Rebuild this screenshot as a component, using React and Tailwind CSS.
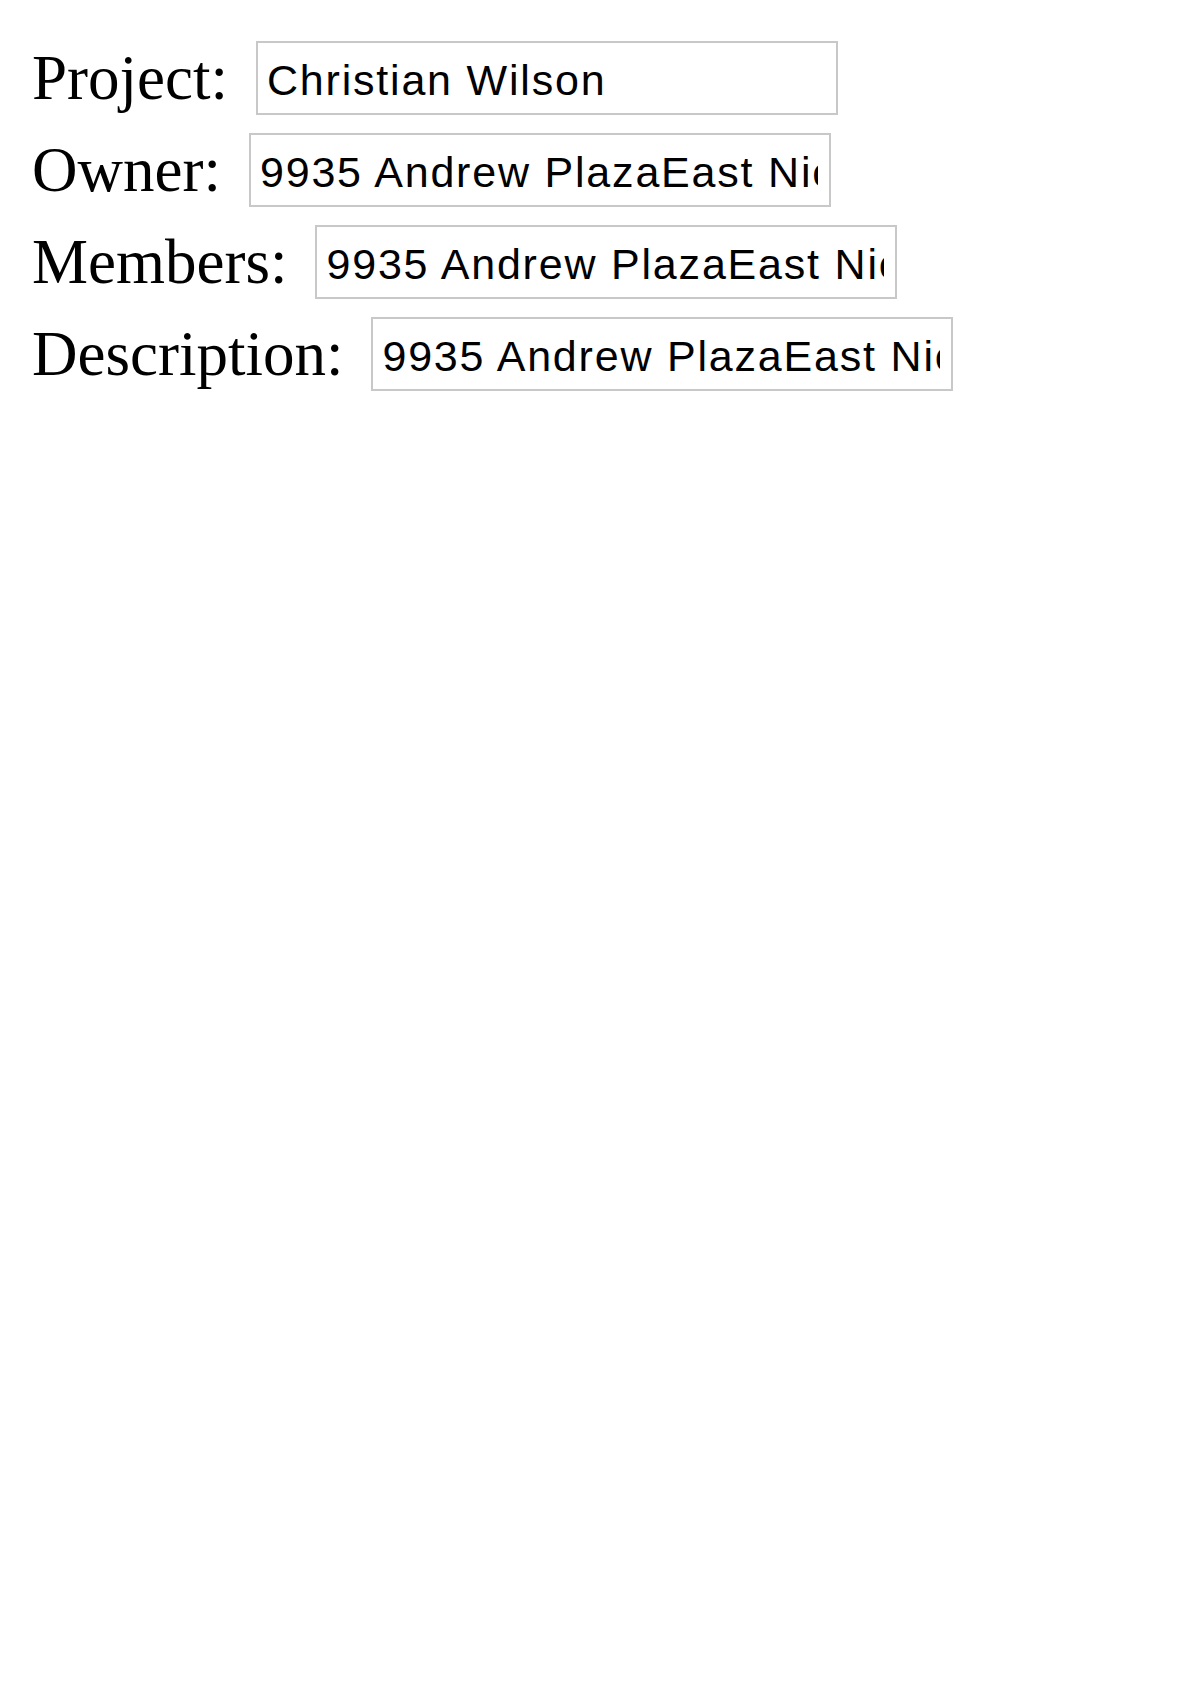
const fields = [
  { label: 'Project:', value: 'Christian Wilson' },
  { label: 'Owner:', value: '9935 Andrew PlazaEast Nicoleside, MA 16240' },
  { label: 'Members:', value: '9935 Andrew PlazaEast Nicoleside, MA 16240' },
  { label: 'Description:', value: '9935 Andrew PlazaEast Nicoleside, MA 16240' },
];

const App = () => {
  return (
    <div className="min-h-screen bg-white pl-[32px] pt-[41px]">
      <div className="flex flex-col gap-[18px]">
        {fields.map((f) => (
          <div key={f.label} className="flex items-center gap-[28px]">
            <label className="text-[63px] leading-none text-black font-['Liberation_Serif','Times_New_Roman',serif]">
              {f.label}
            </label>
            <input
              type="text"
              readOnly
              value={f.value}
              className="h-[74px] w-[582px] border-2 border-[#c8c8c8] bg-white pl-[9px] pr-[11px] pt-[5px] text-[43px] tracking-[1.8px] text-black outline-none font-['Liberation_Sans',Arial,sans-serif]"
            />
          </div>
        ))}
      </div>
    </div>
  );
};

export default App;
